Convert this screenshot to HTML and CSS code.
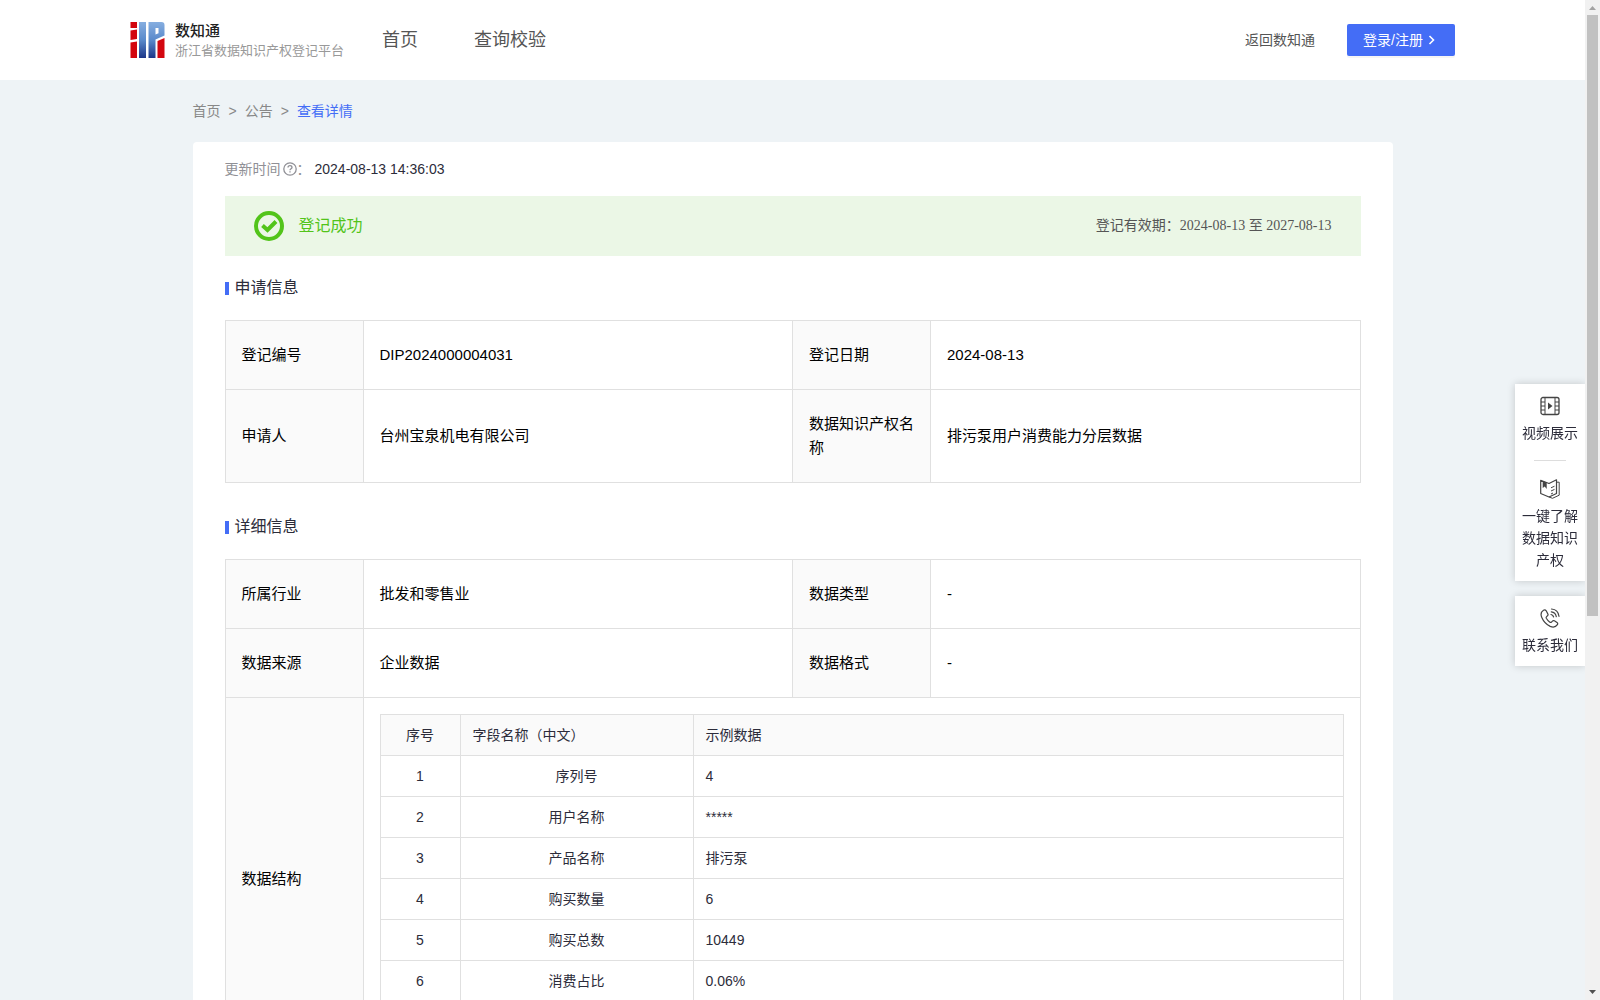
FILE: index.html
```html
<!DOCTYPE html>
<html lang="zh-CN">
<head>
<meta charset="utf-8">
<meta name="viewport" content="width=device-width, initial-scale=1">
<title>数知通 - 查看详情</title>
<link rel="stylesheet" href="styles.css">
</head>
<body>
<div class="app">
  <div class="page">
    <header class="header">
      <a class="brand" href="#">
        <svg class="brand-logo" viewBox="0 0 34 36" aria-hidden="true">
          <defs>
            <linearGradient id="blue" x1="0" y1="0" x2="0" y2="36" gradientUnits="userSpaceOnUse">
              <stop offset="0" stop-color="#86aee0"/>
              <stop offset=".5" stop-color="#5a8acb"/>
              <stop offset="1" stop-color="#1d3688"/>
            </linearGradient>
          </defs>
          <path fill="#d3060f" d="M0 0h6.500v6H0zM0 8.500l6.500-1V17L0 18zM0 20.500l6.500-1V36H0zM27 19l7-3v20h-7z"/>
          <path fill="url(#blue)" fill-rule="evenodd" d="M8.500 0h7v36h-7zM18 0h13q3 0 3 3v10.500l-9 4V36h-7zM25 6v6.500l3-1.300V6z"/>
        </svg>
        <span class="brand-text">
          <strong class="brand-name">数知通</strong>
          <span class="brand-sub">浙江省数据知识产权登记平台</span>
        </span>
      </a>
      <nav class="nav">
        <a href="#">首页</a>
        <a href="#">查询校验</a>
      </nav>
      <a class="back" href="#">返回数知通</a>
      <button class="login" type="button">登录/注册
        <svg class="login-arrow" viewBox="0 0 14 14" aria-hidden="true"><path d="M4.500 3l4 4-4 4" fill="none" stroke="currentColor" stroke-width="1.600"/></svg>
      </button>
    </header>

    <main class="main">
      <nav class="crumbs" aria-label="breadcrumb">
        <a href="#">首页</a><span>&gt;</span><a href="#">公告</a><span>&gt;</span><a class="current" href="#">查看详情</a>
      </nav>

      <section class="card">
        <p class="updated">
          <span class="updated-label">更新时间</span>
          <svg class="help" viewBox="0 0 14 14" fill="none" stroke="currentColor" aria-hidden="true"><circle cx="7" cy="7" r="6.200" stroke-width="1.300"/><path d="M5 5.600C5 4.300 5.900 3.600 7 3.600s2 .7 2 1.800c0 1.200-2 1.400-2 2.900M7 9.300v1.300" stroke-width="1.300"/></svg>
          <span class="updated-label">：</span>
          <time>2024-08-13 14:36:03</time>
        </p>

        <div class="status">
          <svg class="status-icon" viewBox="0 0 30 30" fill="none" stroke="currentColor" aria-hidden="true"><circle cx="15" cy="15" r="13" stroke-width="4"/><path d="M8.500 14.500l5 4.500 8.500-8.500" stroke-width="4"/></svg>
          <span class="status-text">登记成功</span>
          <span class="status-term">登记有效期：2024-08-13 至 2027-08-13</span>
        </div>

        <h2 class="title">申请信息</h2>
        <table class="info">
          <colgroup><col class="label-col"><col><col class="label-col"><col></colgroup>
          <tr><th scope="row">登记编号</th><td>DIP2024000004031</td><th scope="row">登记日期</th><td>2024-08-13</td></tr>
          <tr><th scope="row">申请人</th><td>台州宝泉机电有限公司</td><th scope="row">数据知识产权名称</th><td>排污泵用户消费能力分层数据</td></tr>
        </table>

        <h2 class="title">详细信息</h2>
        <table class="info">
          <colgroup><col class="label-col"><col><col class="label-col"><col></colgroup>
          <tr><th scope="row">所属行业</th><td>批发和零售业</td><th scope="row">数据类型</th><td>-</td></tr>
          <tr><th scope="row">数据来源</th><td>企业数据</td><th scope="row">数据格式</th><td>-</td></tr>
          <tr>
            <th scope="row">数据结构</th>
            <td class="nested" colspan="3">
              <table class="fields">
                <colgroup><col class="no-col"><col class="name-col"><col></colgroup>
                <thead><tr><th scope="col">序号</th><th scope="col">字段名称（中文）</th><th scope="col">示例数据</th></tr></thead>
                <tbody>
                  <tr><td>1</td><td>序列号</td><td>4</td></tr>
                  <tr><td>2</td><td>用户名称</td><td>*****</td></tr>
                  <tr><td>3</td><td>产品名称</td><td>排污泵</td></tr>
                  <tr><td>4</td><td>购买数量</td><td>6</td></tr>
                  <tr><td>5</td><td>购买总数</td><td>10449</td></tr>
                  <tr><td>6</td><td>消费占比</td><td>0.06%</td></tr>
                  <tr><td></td><td></td><td></td></tr>
                </tbody>
              </table>
            </td>
          </tr>
        </table>
      </section>
    </main>
  </div>

  <div class="scrollbar" aria-hidden="true">
    <svg class="scroll-arrow" viewBox="0 0 15 15"><path d="M7.500 6l3.500 4H4z" fill="#a3a3a3"/></svg>
    <div class="scroll-track"><div class="scroll-thumb"></div></div>
    <svg class="scroll-arrow" viewBox="0 0 15 15"><path d="M7.500 9L4 5h7z" fill="#505050"/></svg>
  </div>
</div>

<aside class="dock">
  <div class="dock-box">
    <a class="dock-item" href="#">
      <svg class="dock-icon" viewBox="0 0 20 20" fill="none" stroke="currentColor" aria-hidden="true"><rect x="1" y="1.500" width="18" height="17" rx="2" stroke-width="1.300"/><path d="M5 1.500v17M15 1.500v17M1 6h4M1 10h4M1 14h4M15 6h4M15 10h4M15 14h4"/><path d="M8 6.500v7l4.500-3.500z" fill="currentColor" stroke="none"/></svg>
      <span>视频展示</span>
    </a>
    <a class="dock-item" href="#">
      <svg class="dock-icon" viewBox="0 0 20 20" fill="none" stroke="currentColor" stroke-linejoin="round" aria-hidden="true"><path d="M.7 1.300L9 4.500l7.500-3.700v13.700L9 18 .7 14.500z" stroke-width="1.200"/><path d="M16.500 3.200h2.700v13L12.500 19.300 9 18M11 8.800l3.500-1.600M11 12l3.500-1.600M11 15l2-1"/><path d="M2.700 2v7l2-1.500L6.700 10V3.600z" fill="currentColor" stroke="none"/></svg>
      <span>一键了解数据知识产权</span>
    </a>
  </div>
  <div class="dock-box">
    <a class="dock-item" href="#">
      <svg class="dock-icon" viewBox="0 0 20 20" fill="none" stroke="currentColor" stroke-width="1.200" stroke-linecap="round" stroke-linejoin="round" aria-hidden="true"><path d="M3.500 2.200C1 3.800.5 6.500 1.800 9.500c1.700 4 4.500 7 8.400 8.900 3 1.300 5.500.8 7.200-1.700.5-.8.300-1.600-.4-2.100l-2.600-1.800c-.7-.4-1.500-.3-2 .3l-.9 1c-.5.500-1 .5-1.600.1-1.500-1.100-2.700-2.400-3.600-4-.3-.6-.2-1.100.3-1.600l.9-.8c.6-.5.7-1.200.3-1.900L6.200 2.800c-.6-.9-1.700-1.200-2.700-.6z"/><path d="M11.500 1c4.300.3 7 3 7.500 7.300M11.300 3.800c2.700.3 4.500 2 5 4.800M11 6.500c1.500.3 2.300 1.100 2.600 2.500"/></svg>
      <span>联系我们</span>
    </a>
  </div>
</aside>
</body>
</html>
```
FILE: styles.css
```css
* {
  box-sizing: border-box;
}

body {
  margin: 0;
  background: #eef3f6;
  color: #2c2c3a;
  font: 14px/22px "Liberation Sans", "Noto Sans CJK SC", sans-serif;
}

a {
  color: inherit;
  text-decoration: none;
}

svg {
  display: block;
  flex: none;
}

.app {
  display: flex;
  height: 100vh;
}

.page {
  flex: 1;
  min-width: 0;
  overflow-y: auto;
  scrollbar-width: none;
}

/* Header */
.header {
  display: flex;
  align-items: center;
  height: 80px;
  padding: 0 130px;
  background: #fff;
}

.brand {
  display: flex;
  align-items: center;
  gap: 10px;
}

.brand-logo {
  width: 35px;
  height: 36px;
}

.brand-text {
  display: flex;
  flex-direction: column;
  padding-top: 2px;
}

.brand-name {
  color: #222;
  font-size: 15px;
  font-weight: 500;
  line-height: 20px;
}

.brand-sub {
  color: #999;
  font-size: 13px;
  line-height: 20px;
}

.nav {
  display: flex;
  flex: 1;
  gap: 56px;
  margin-left: 38px;
  color: #555;
  font-size: 18px;
}

.back {
  margin-right: 32px;
  color: #555;
}

.login {
  display: flex;
  align-items: center;
  gap: 2px;
  height: 32px;
  padding: 0 16px;
  border: 0;
  border-radius: 2px;
  background: #446df6;
  box-shadow: 0 2px 0 rgba(0, 0, 0, 0.04);
  color: #fff;
  font: inherit;
}

.login-arrow {
  width: 14px;
  height: 14px;
}

/* Content */
.main {
  max-width: 1200px;
  margin: 0 auto;
}

.crumbs {
  display: flex;
  gap: 8px;
  padding: 20px 0;
  color: #888;
}

.crumbs .current {
  color: #446df6;
}

.card {
  padding: 16px 32px 32px;
  border-radius: 4px;
  background: #fff;
}

.updated {
  display: flex;
  align-items: center;
  margin: 0 0 16px;
}

.updated-label {
  color: #909096;
}

.help {
  width: 14px;
  height: 14px;
  margin-left: 2px;
  color: #909096;
}

.updated time {
  margin-left: 4px;
}

.status {
  display: flex;
  align-items: center;
  height: 60px;
  padding: 0 29px;
  background: #ebf7e6;
  color: #52c41a;
}

.status-icon {
  width: 30px;
  height: 30px;
  margin-right: 15px;
}

.status-text {
  flex: 1;
  font-size: 16px;
}

.status-term {
  color: #555;
  font-family: "Liberation Serif", "Noto Sans CJK SC", serif;
}

.title {
  display: flex;
  align-items: center;
  gap: 6px;
  margin: 20px 0;
  font-size: 16px;
  font-weight: 400;
  line-height: 24px;
}

.title::before {
  width: 4px;
  height: 13px;
  background: #446df6;
  content: "";
}

.info + .title {
  margin-top: 32px;
}

/* Tables */
.info,
.fields {
  width: 100%;
  border-collapse: collapse;
  table-layout: fixed;
}

th,
td {
  border: 1px solid #e0e0e0;
  font-weight: 400;
  text-align: left;
}

th {
  background: #fafafa;
}

.label-col {
  width: 138px;
}

.info th,
.info td {
  padding: 22px 16px;
  color: #000;
  font-size: 15px;
  line-height: 24px;
}

.info .nested {
  padding: 16px;
}

.no-col {
  width: 80px;
}

.name-col {
  width: 233px;
}

.info .fields th,
.info .fields td {
  height: 41px;
  padding: 9px 12px;
  color: #2c2c3a;
  font-size: 14px;
  line-height: 22px;
}

.fields th:first-child,
.info .fields td:first-child,
.info .fields td:nth-child(2) {
  text-align: center;
}

/* Floating shortcuts */
.dock {
  display: flex;
  position: fixed;
  top: 384px;
  right: 15px;
  flex-direction: column;
  gap: 15px;
  width: 70px;
}

.dock-box {
  background: #fff;
  box-shadow: 0 0 8px rgba(0, 0, 0, 0.18);
  clip-path: inset(-10px 0 -10px -10px);
}

.dock-item {
  display: flex;
  flex-direction: column;
  align-items: center;
  gap: 6px;
  padding: 12px 7px 10px;
  text-align: center;
}

.dock-item + .dock-item::before {
  width: 32px;
  height: 1px;
  margin: -6px 0 12px;
  background: #ddd;
  content: "";
}

.dock-icon {
  width: 20px;
  height: 20px;
  color: #444;
}

/* Scrollbar */
.scrollbar {
  display: flex;
  flex: none;
  flex-direction: column;
  width: 15px;
  background: #f1f1f1;
}

.scroll-arrow {
  width: 15px;
  height: 15px;
}

.scroll-track {
  flex: 1;
  padding: 0 2px;
}

.scroll-thumb {
  height: 62%;
  background: #c1c1c1;
}
```
